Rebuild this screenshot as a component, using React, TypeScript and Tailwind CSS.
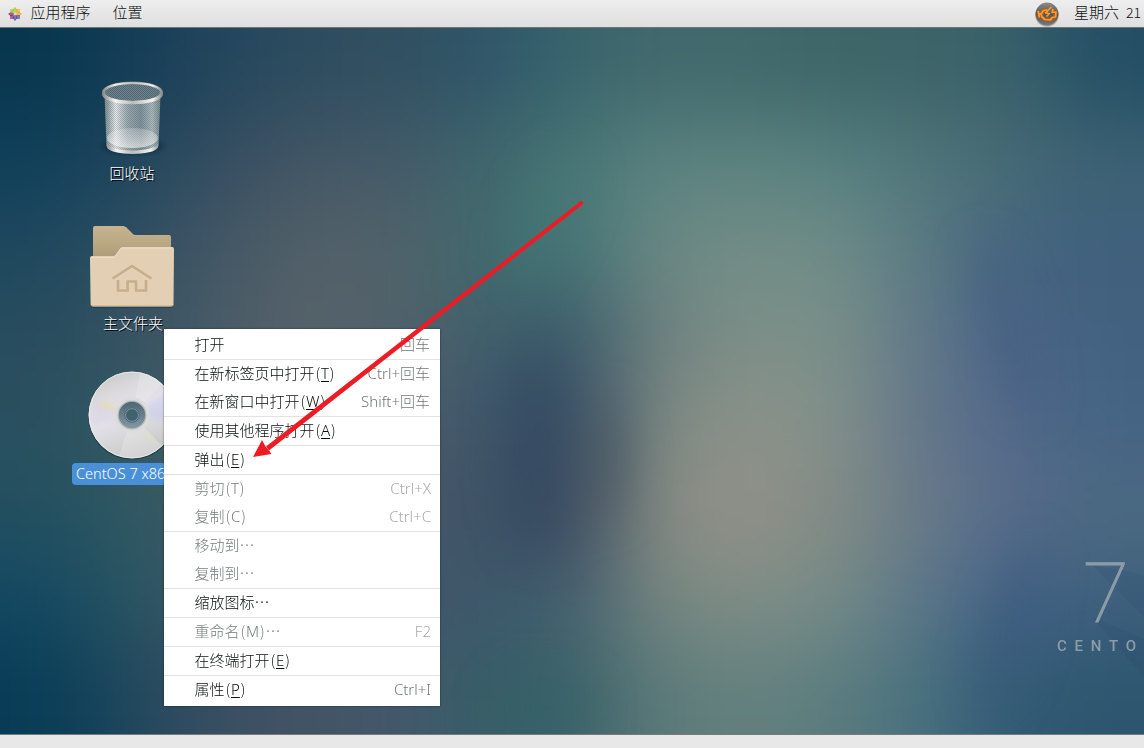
import React from 'react';
import clsx from 'clsx';

const wallpaper = [
  ['#08364f', '#153d57', '#23465c', '#2d4c60', '#31505f', '#2f556a', '#38646c', '#42696d', '#41686a', '#3d6567', '#3d6468', '#38606a', '#234e64'],
  ['#10405a', '#20465d', '#364e61', '#445665', '#445a69', '#3f666c', '#4a7776', '#5a8280', '#5c8480', '#568080', '#50757a', '#476a74', '#3d6274'],
  ['#1f485e', '#304f62', '#445766', '#536168', '#51626a', '#41696d', '#457676', '#6a8884', '#748d86', '#6e8c88', '#5a7a82', '#456580', '#40607c'],
  ['#284d5e', '#375262', '#4b5c67', '#56626a', '#52616a', '#3f5f6b', '#3b5a6a', '#6e807e', '#7d9089', '#7a8f88', '#5f7788', '#4d6688', '#426180'],
  ['#2a5060', '#365a63', '#475c67', '#52606a', '#4c5b68', '#3f566a', '#384e65', '#7e8a83', '#8c9289', '#82908a', '#62758a', '#53698a', '#456485'],
  ['#225060', '#2f5862', '#415a66', '#4c5d68', '#46586a', '#3f5265', '#3c4a60', '#878d84', '#939089', '#828b84', '#687a88', '#566a8a', '#4c6a80'],
  ['#134862', '#2a5562', '#3e5664', '#465966', '#44566a', '#3b586a', '#436070', '#75867f', '#7f8d86', '#748b87', '#587488', '#456488', '#3d5f7e'],
  ['#083c56', '#1f475c', '#3a4f63', '#435463', '#44586a', '#365e68', '#3d6469', '#5b7a7a', '#64817e', '#5a7c7e', '#47707e', '#325a74', '#2d566e'],
];

const menuGroups = [
  [{ label: '打开', shortcut: '回车' }],
  [
    { label: '在新标签页中打开', accel: 'T', shortcut: 'Ctrl+回车' },
    { label: '在新窗口中打开', accel: 'W', shortcut: 'Shift+回车' },
  ],
  [{ label: '使用其他程序打开', accel: 'A' }],
  [{ label: '弹出', accel: 'E' }],
  [
    { label: '剪切', accel: 'T', shortcut: 'Ctrl+X', disabled: true },
    { label: '复制', accel: 'C', shortcut: 'Ctrl+C', disabled: true },
  ],
  [
    { label: '移动到…', disabled: true },
    { label: '复制到…', disabled: true },
  ],
  [{ label: '缩放图标…' }],
  [{ label: '重命名', accel: 'M', suffix: '…', shortcut: 'F2', disabled: true }],
  [{ label: '在终端打开', accel: 'E' }],
  [{ label: '属性', accel: 'P', shortcut: 'Ctrl+I' }],
] as {
  label: string;
  accel?: string;
  suffix?: string;
  shortcut?: string;
  disabled?: boolean;
}[][];

function Wallpaper() {
  return (
    <svg className="absolute inset-0 h-full w-full" viewBox="0 0 1144 706">
      <defs>
        <filter id="soften" x="-10%" y="-10%" width="120%" height="120%" colorInterpolationFilters="sRGB">
          <feGaussianBlur stdDeviation="42" />
        </filter>
        <filter id="streak" x="-100%" y="-100%" width="300%" height="300%" colorInterpolationFilters="sRGB">
          <feGaussianBlur stdDeviation="22" />
        </filter>
      </defs>
      <g filter="url(#soften)">
        {wallpaper.map((row, y) =>
          row.map((color, x) => {
            const left = x === 0 ? -150 : x * 88;
            const right = x === 12 ? 1300 : x * 88 + 89;
            const top = y === 0 ? -150 : y * 88.4;
            const bottom = y === 7 ? 860 : y * 88.4 + 89.4;
            return (
              <rect key={`${x}-${y}`} x={left} y={top} width={right - left} height={bottom - top} fill={color} />
            );
          })
        )}
      </g>
      <g filter="url(#streak)">
        <ellipse cx="1008" cy="300" rx="18" ry="90" fill="#3f567e" opacity="0.45" transform="rotate(-16 1008 300)" />
        <ellipse cx="536" cy="420" rx="30" ry="105" fill="#2f4560" opacity="0.5" />
        <ellipse cx="602" cy="430" rx="24" ry="60" fill="#46565f" opacity="0.5" />
        <ellipse cx="1010" cy="600" rx="22" ry="90" fill="#36557a" opacity="0.4" transform="rotate(16 1010 600)" />
        <ellipse cx="545" cy="190" rx="24" ry="70" fill="#437b79" opacity="0.4" transform="rotate(24 545 190)" />
        <ellipse cx="545" cy="680" rx="50" ry="34" fill="#2f6068" opacity="0.4" />
      </g>
      <path d="M1092 537 L1144 547 V589 Z M1092 589 L1144 611 V649 Z" fill="#1c3c66" opacity="0.1" />
    </svg>
  );
}

function CentosLogo() {
  const petals = ['#9ccd2a', '#efa724', '#4b4a98', '#932279'];
  return (
    <svg className="h-4 w-4" viewBox="-8 -8 16 16">
      {petals.map((color, i) => (
        <g key={color} transform={`rotate(${i * 90})`}>
          <path d="M0 -0.500 L-2.600 -3.600 L0 -7 L2.600 -3.600 Z" fill={color} opacity="0.85" />
          <path d="M1 -1 V-5 H5 V-1 Z" fill={petals[(i + 1) % 4]} opacity="0.65" />
        </g>
      ))}
      <path d="M-5 0 H5 M0 -5 V5" stroke="#eee" strokeWidth="0.5" opacity="0.6" />
    </svg>
  );
}

function EngineIcon() {
  return (
    <svg className="h-[26px] w-[26px]" viewBox="0 0 26 26">
      <defs>
        <linearGradient id="tray" x1="0" y1="0" x2="0" y2="1">
          <stop offset="0" stopColor="#8c8c8c" />
          <stop offset="0.5" stopColor="#555" />
          <stop offset="1" stopColor="#777" />
        </linearGradient>
      </defs>
      <ellipse cx="13" cy="14" rx="11.8" ry="11.6" fill="#a7a7a7" />
      <circle cx="13" cy="13" r="11.4" fill="url(#tray)" />
      <g fill="none" stroke="#b8600d" strokeWidth="3.6" strokeLinejoin="round" opacity="0.8">
        <path d="M4.500 10 L5.500 17 M5 13 L8 12 L10 9 L14 8.500 M18 10 L21.500 10.500 L21 16 L18 18.500 H11 L7 15" />
      </g>
      <g fill="none" stroke="#ff9a30" strokeWidth="1.700" strokeLinejoin="round">
        <path d="M4.200 10 L5.500 16.500 M5 13 L7.500 12.500 L9.500 9.500 L13.500 9 M19 8 L18 11.500 L22 11 L21.500 16 L18 16.500 L16.500 18.800 L11 18.500 L8 16 L7 13" />
        <path d="M17.500 6 L11.500 12 L15.500 12.500 L12.500 15.500" />
      </g>
    </svg>
  );
}

function TrashIcon() {
  return (
    <svg className="h-[80px] w-[72px]" viewBox="0 0 72 80">
      <defs>
        <linearGradient id="can" x1="0" x2="1">
          <stop offset="0" stopColor="#8d9998" stopOpacity="0.85" />
          <stop offset="0.2" stopColor="#f4f5f5" stopOpacity="0.95" />
          <stop offset="0.42" stopColor="#bcc3c3" stopOpacity="0.8" />
          <stop offset="0.65" stopColor="#a3afb1" stopOpacity="0.75" />
          <stop offset="0.85" stopColor="#d3dbda" stopOpacity="0.8" />
          <stop offset="1" stopColor="#879493" stopOpacity="0.85" />
        </linearGradient>
        <linearGradient id="rim" x1="0" x2="1">
          <stop offset="0" stopColor="#8e9292" />
          <stop offset="0.2" stopColor="#f4f4f4" />
          <stop offset="0.5" stopColor="#b9bcbb" />
          <stop offset="0.85" stopColor="#f2f3f2" />
          <stop offset="1" stopColor="#8e9292" />
        </linearGradient>
        <linearGradient id="glow" x1="0" y1="0" x2="0" y2="1">
          <stop offset="0" stopColor="#e8ebea" stopOpacity="0.25" />
          <stop offset="1" stopColor="#fff" stopOpacity="0.6" />
        </linearGradient>
        <pattern id="mesh" width="2" height="2" patternUnits="userSpaceOnUse">
          <rect width="1" height="1" fill="#2f4653" opacity="0.5" />
          <rect x="1" y="1" width="1" height="1" fill="#2f4653" opacity="0.5" />
        </pattern>
        <filter id="trashShadow">
          <feGaussianBlur stdDeviation="2.2" />
        </filter>
      </defs>
      <ellipse cx="37" cy="68" rx="31" ry="8" fill="#0a1c28" opacity="0.45" filter="url(#trashShadow)" />
      <ellipse cx="36.500" cy="15" rx="28" ry="9" fill="#6f848e" />
      <ellipse cx="36.500" cy="15" rx="28" ry="9" fill="url(#mesh)" />
      <path d="M8.500 17 L10.500 68 C14 77 59 77 62.500 68 L64.500 17 C60 26 13 26 8.500 17 Z" fill="url(#can)" />
      <path d="M8.500 17 L10.500 68 C14 77 59 77 62.500 68 L64.500 17 C60 26 13 26 8.500 17 Z" fill="url(#mesh)" opacity="0.5" />
      <ellipse cx="36.500" cy="60" rx="25.500" ry="10" fill="url(#glow)" />
      <path d="M10.500 65 C14 75 59 75 62.500 65 L62 69.500 C58 78 15 78 11 69.500 Z" fill="url(#rim)" />
      <ellipse cx="36.500" cy="14.500" rx="29" ry="9.500" fill="none" stroke="#7d8484" strokeWidth="3.200" />
      <ellipse cx="36.500" cy="14.500" rx="29" ry="9.500" fill="none" stroke="url(#rim)" strokeWidth="2" />
      <path d="M7.500 16 C10 27.500 63 27.500 65.500 16" fill="none" stroke="url(#rim)" strokeWidth="3.400" />
    </svg>
  );
}

function FolderIcon() {
  return (
    <svg className="h-[84px] w-[86px]" viewBox="0 0 86 84">
      <defs>
        <linearGradient id="back" x1="0" y1="0" x2="0" y2="1">
          <stop offset="0" stopColor="#c6b491" />
          <stop offset="0.38" stopColor="#bba984" />
          <stop offset="1" stopColor="#a39271" />
        </linearGradient>
      </defs>
      <path d="M2 36 H84 V81 Q84 83 82 83 H4 Q2 83 2 81 Z" fill="#10222d" opacity="0.35" />
      <path d="M4 3 Q4 1 6 1 H34 Q36 1 37.500 2.500 L44 9 Q45 10 47 10 H80 Q82 10 82 12 V44 H4 Z" fill="url(#back)" />
      <path
        d="M1 33 Q1 31 3 31 H24 Q26 31 27 29.500 L31 23.500 Q32 22 34 22 H83 Q85 22 85 24 L84.500 79 Q84.500 81.500 82 81.500 H4 Q1.700 81.500 1.600 79 Z"
        fill="#e3d0b4"
      />
      <path d="M2 79.500 Q2 81 4 81 H82 Q84 81 84.200 79.500" fill="none" stroke="#c5ab86" />
      <path d="M2 32.500 H25 L32.500 23 H84" fill="none" stroke="#eee0ca" strokeWidth="0.800" />
      <g fill="none" stroke="#c6ae8c" strokeWidth="2.600">
        <path d="M23.500 53.500 L43 41 L62.500 53.500" />
        <path d="M29 55 V65.500 H38.600 V56.500 H47 V65.500 H57 V55" />
      </g>
    </svg>
  );
}

function DiscIcon() {
  return (
    <svg className="h-[90px] w-[90px]" viewBox="-45 -45 90 90">
      <defs>
        <linearGradient id="disc" x1="0.2" y1="0" x2="0.6" y2="1">
          <stop offset="0" stopColor="#c8c8c8" />
          <stop offset="0.25" stopColor="#dcdadd" />
          <stop offset="0.5" stopColor="#e4e2ea" />
          <stop offset="0.8" stopColor="#d2d2d3" />
          <stop offset="1" stopColor="#c3c3c3" />
        </linearGradient>
        <radialGradient id="sheen">
          <stop offset="0" stopColor="#e5e0a8" stopOpacity="0.7" />
          <stop offset="1" stopColor="#e5e0a8" stopOpacity="0" />
        </radialGradient>
        <linearGradient id="hub" x1="0" y1="0" x2="0" y2="1">
          <stop offset="0" stopColor="#4d6672" />
          <stop offset="1" stopColor="#8299a4" />
        </linearGradient>
        <filter id="foil">
          <feGaussianBlur stdDeviation="2" />
        </filter>
      </defs>
      <circle cy="0.800" r="44" fill="#162c36" opacity="0.45" />
      <circle r="43.300" fill="url(#disc)" />
      <path d="M0 0 L-36 -16 A40 40 0 0 0 -38 12 Z" fill="#d9cfe6" opacity="0.4" filter="url(#foil)" />
      <path d="M0 0 L-13 41 A43 43 0 0 0 30 31 Z" fill="#f2f2f3" opacity="0.3" />
      <path d="M0 0 L39 8 A40 40 0 0 0 33 -21 Z" fill="#c4c8f0" opacity="0.45" filter="url(#foil)" />
      <path d="M0 0 L8 -42 A43 43 0 0 1 30 -31 Z" fill="#f0eeee" opacity="0.3" />
      <ellipse cx="-24" cy="-9" rx="14" ry="6" fill="url(#sheen)" transform="rotate(20 -24 -9)" />
      <ellipse cx="17" cy="22" rx="13" ry="5" fill="url(#sheen)" transform="rotate(52 17 22)" opacity="0.5" />
      <circle r="43" fill="none" stroke="#efefef" strokeWidth="0.900" />
      <circle r="17.800" fill="#dcdcdb" />
      <circle r="14.500" fill="#b2babb" />
      <circle r="13.200" fill="url(#hub)" />
      <circle r="7.800" fill="#6e8995" />
      <circle r="6.500" fill="#3f626d" stroke="#8fa8b0" strokeWidth="1" />
      <circle r="7.200" fill="none" stroke="#2c4650" strokeWidth="0.600" />
    </svg>
  );
}

function ContextMenu() {
  return (
    <div className="absolute left-[164px] top-[301px] w-[276px] divide-y divide-[#e2e2e2] bg-white py-[2px] text-[15px] text-[#0c0f10] shadow-[0_0_2px_rgba(0,0,0,0.5)]">
      {menuGroups.map((group, i) => (
        <div key={i}>
          {group.map((item) => (
            <div
              key={item.label}
              className={clsx(
                'flex h-7 items-center justify-between whitespace-nowrap pb-[2px] pl-[30.5px]',
                item.shortcut?.endsWith('车') ? 'pr-[10px]' : 'pr-[9px]',
                item.disabled && 'text-[#787b7c]'
              )}
            >
              <span className="flex items-center font-['Noto_Sans_CJK_SC',sans-serif] font-light leading-[26px]">
                {item.label}
                {item.accel && (
                  <>
                    <span className="w-[6.5px] text-center">(</span>
                    <span
                      className={clsx(
                        "font-['Noto_Sans',sans-serif] font-light underline-offset-2",
                        !item.disabled && 'underline'
                      )}
                    >
                      {item.accel}
                    </span>
                    <span className="w-[6.5px] text-center">)</span>
                  </>
                )}
                {item.suffix}
              </span>
              <span
                className={clsx(
                  "font-['Noto_Sans','Noto_Sans_CJK_SC',sans-serif] font-light",
                  item.disabled ? 'text-[#a8aaab]' : 'text-[#747778]'
                )}
              >
                {item.shortcut}
              </span>
            </div>
          ))}
        </div>
      ))}
    </div>
  );
}

export default function App() {
  return (
    <div className="flex h-[748px] w-[1144px] flex-col overflow-hidden font-['Noto_Sans_CJK_SC',sans-serif] text-[15px] font-light">
      <header className="flex h-[28px] shrink-0 items-center justify-between whitespace-nowrap border-b border-[#6f7676] bg-linear-to-b from-[#eeeeee] to-[#dfdfdf] text-[#0c0f10]">
        <nav className="flex items-center pl-[7px] leading-[24px]">
          <CentosLogo />
          <span className="mb-[3px] ml-[7.5px]">应用程序</span>
          <span className="mb-[3px] ml-[22px]">位置</span>
        </nav>
        <div className="flex items-center pr-[3px] leading-[24px]">
          <EngineIcon />
          <span className="mb-[3px] ml-[14px]">星期六</span>
          <span className="mb-[3px] ml-[7px] text-[14px]">21</span>
        </div>
      </header>

      <main className="relative flex-1 overflow-hidden">
        <Wallpaper />

        <div className="absolute left-[72px] top-[50px] flex w-[120px] flex-col items-center text-white [text-shadow:1px_1px_0_#000]">
          <TrashIcon />
          <span className="mt-[4px] leading-[22px]">回收站</span>
        </div>
        <div className="absolute left-[72px] top-[197px] flex w-[120px] flex-col items-center text-white [text-shadow:1px_1px_0_#000]">
          <FolderIcon />
          <span className="mt-[3px] pl-[2px] leading-[22px]">主文件夹</span>
        </div>
        <div className="absolute left-[72px] top-[342px] flex w-[120px] flex-col items-center text-white">
          <DiscIcon />
          <span className="mt-[3px] h-[22px] w-full whitespace-nowrap rounded bg-[#4a90d9] pl-1 font-['Noto_Sans',sans-serif] text-[14.5px] leading-[20px]">
            CentOS 7 x86
          </span>
        </div>

        <div className="absolute left-[1057px] top-[530px] text-[#8c9da6]">
          <div className="pl-[26px] font-[Roboto,sans-serif] text-[84px] font-thin leading-[72px] [-webkit-text-stroke:1px_#8c9da6]">7</div>
          <div className="mt-[6px] font-[Roboto,sans-serif] text-[15px] font-medium leading-[20px] tracking-[7.8px]">CENTO</div>
        </div>

        <ContextMenu />

        <svg className="absolute left-[240px] top-[162px] h-[280px] w-[360px]" viewBox="240 190 360 280">
          <path d="M580.200 201.400 L582.600 204.600 L269 450.500 L266 446.400 Z" fill="#ed1c24" />
          <circle cx="581.300" cy="203" r="2" fill="#ed1c24" />
          <path d="M253 457 L262 440 L265.500 446.400 L269 450.500 L271.500 454 Z" fill="#ed1c24" />
        </svg>
      </main>

      <footer className="h-[14px] shrink-0 border-t border-[#77797b] bg-[#e8e8e8]" />
    </div>
  );
}
